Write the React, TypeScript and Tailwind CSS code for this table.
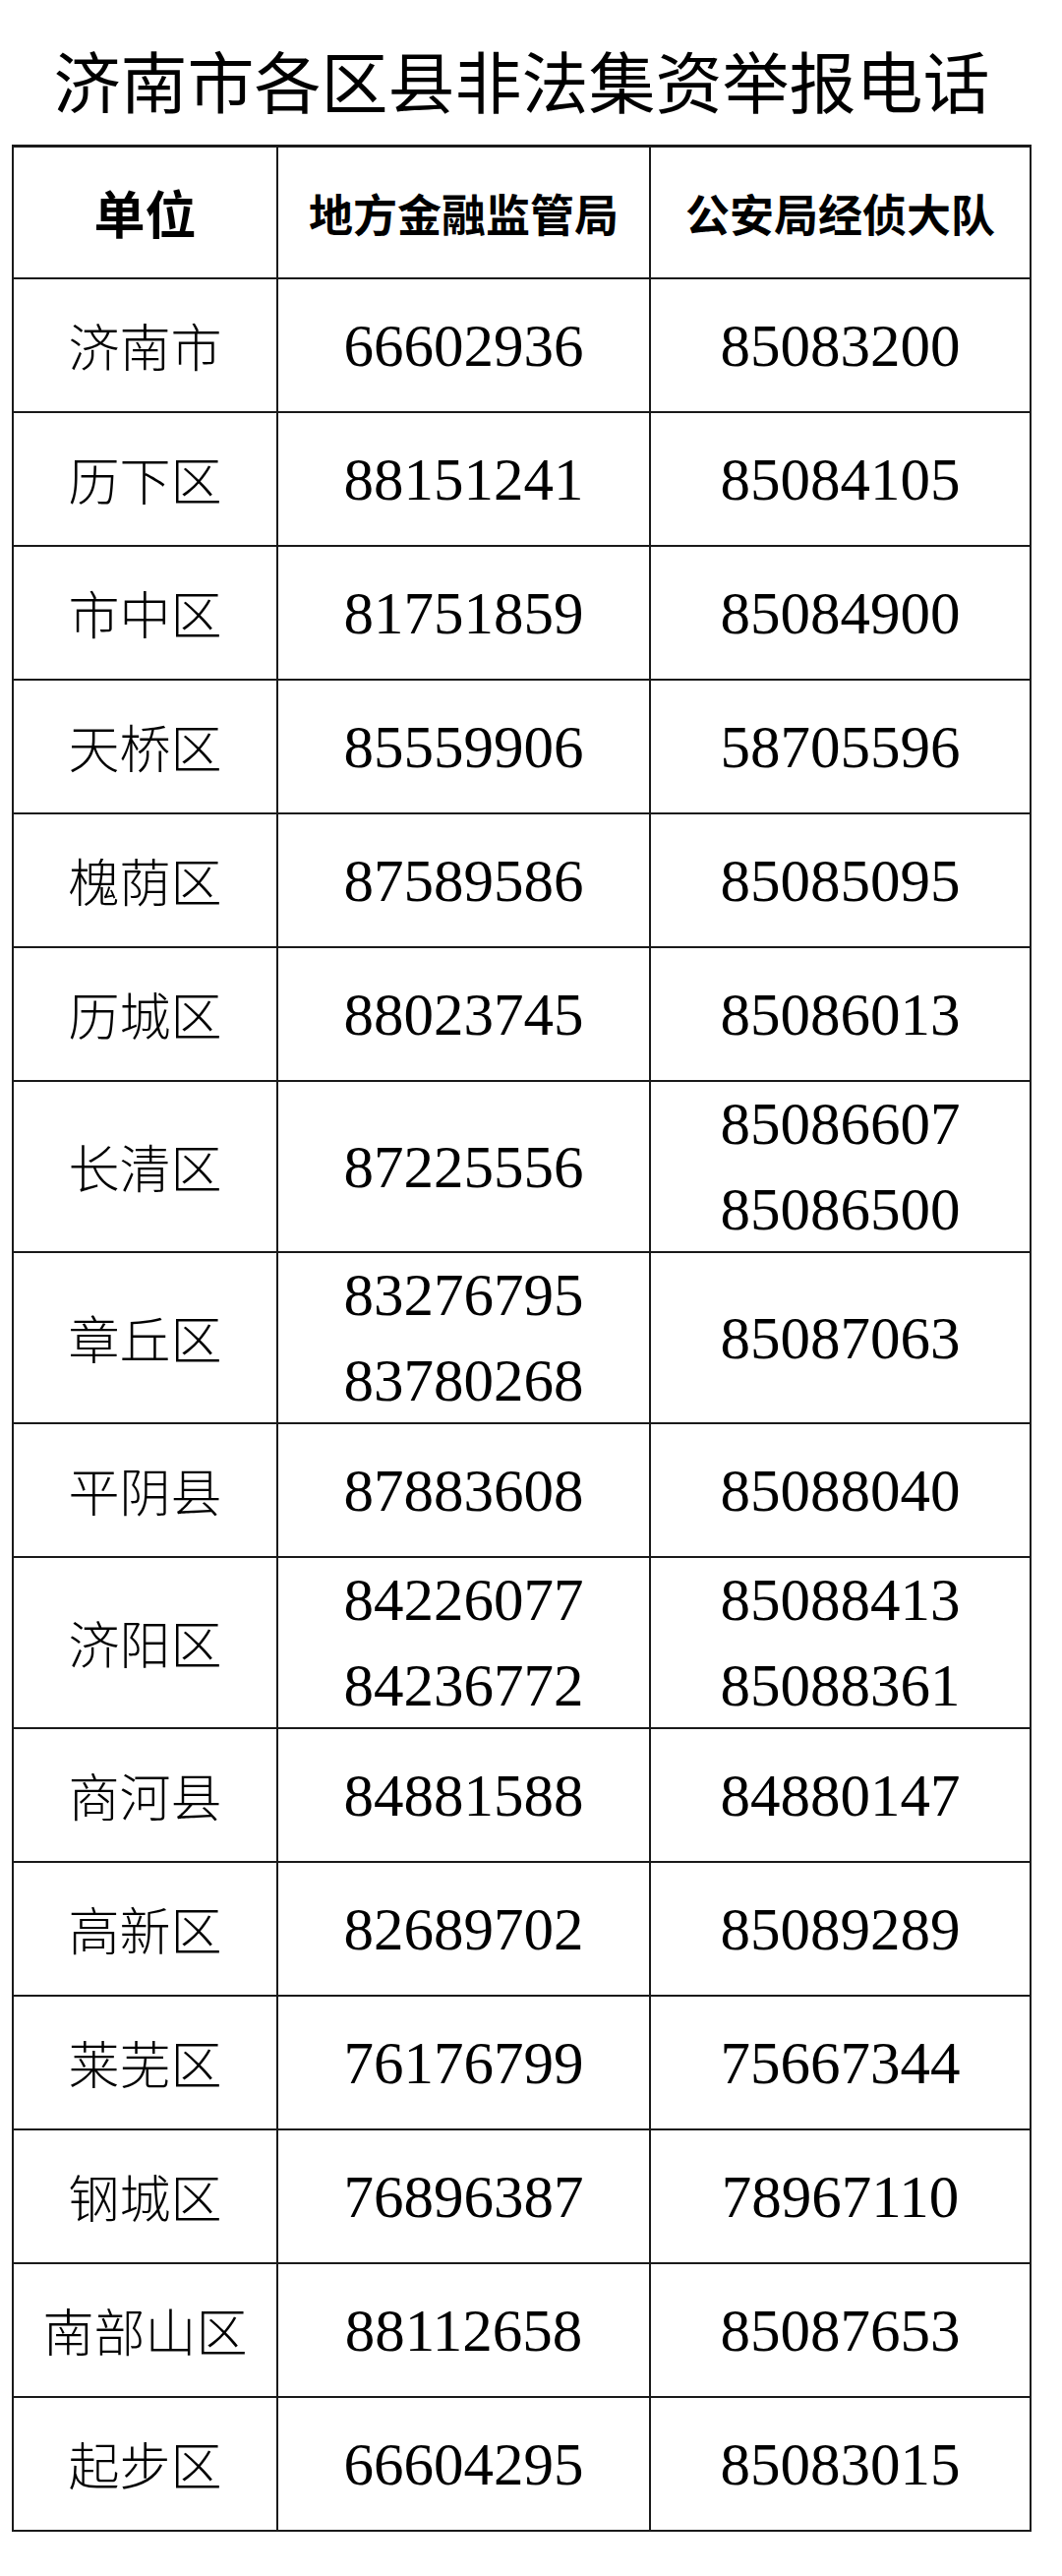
import React from "react";

type Row = { name: string; a: string[]; b: string[] };

const rows: Row[] = [
  { name: "济南市", a: ["66602936"], b: ["85083200"] },
  { name: "历下区", a: ["88151241"], b: ["85084105"] },
  { name: "市中区", a: ["81751859"], b: ["85084900"] },
  { name: "天桥区", a: ["85559906"], b: ["58705596"] },
  { name: "槐荫区", a: ["87589586"], b: ["85085095"] },
  { name: "历城区", a: ["88023745"], b: ["85086013"] },
  { name: "长清区", a: ["87225556"], b: ["85086607", "85086500"] },
  { name: "章丘区", a: ["83276795", "83780268"], b: ["85087063"] },
  { name: "平阴县", a: ["87883608"], b: ["85088040"] },
  { name: "济阳区", a: ["84226077", "84236772"], b: ["85088413", "85088361"] },
  { name: "商河县", a: ["84881588"], b: ["84880147"] },
  { name: "高新区", a: ["82689702"], b: ["85089289"] },
  { name: "莱芜区", a: ["76176799"], b: ["75667344"] },
  { name: "钢城区", a: ["76896387"], b: ["78967110"] },
  { name: "南部山区", a: ["88112658"], b: ["85087653"] },
  { name: "起步区", a: ["66604295"], b: ["85083015"] },
];

function Nums({ list, tall }: { list: string[]; tall: boolean }) {
  return (
    <div
      className={
        (tall ? "h-[174px] " : "h-[136px] ") +
        "flex flex-col items-center justify-center border-r-2 border-b-2 border-[#1a1a1a]"
      }
    >
      {list.map((n) => (
        <div
          key={n}
          className="font-['Liberation_Serif','DejaVu_Serif',serif] text-[61px] leading-[87px] text-black"
        >
          {n}
        </div>
      ))}
    </div>
  );
}

function Head({ text, big }: { text: string; big?: boolean }) {
  return (
    <div
      className={
        (big ? "text-[52px] " : "text-[45px] ") +
        "h-[134px] flex items-center justify-center border-r-2 border-b-2 border-[#1a1a1a] font-['Noto_Sans_CJK_SC','Noto_Sans',sans-serif] leading-none font-bold text-black"
      }
    >
      {text}
    </div>
  );
}

export default function App() {
  return (
    <div className="w-[1080px] h-[2619px] bg-white">
      <div className="ml-[12px] w-[1037px]">
        <div className="h-[147px] pt-[47px] text-center font-['Noto_Sans_CJK_SC','Noto_Sans',sans-serif] text-[68px] leading-[68px] font-normal text-black">
          济南市各区县非法集资举报电话
        </div>
        <div className="grid grid-cols-[269px_379px_387px] border-t-[3px] border-l-2 border-[#1a1a1a]">
          <Head text="单位" big />
          <Head text="地方金融监管局" />
          <Head text="公安局经侦大队" />
          {rows.map((r) => {
            const tall = r.a.length > 1 || r.b.length > 1;
            return (
              <React.Fragment key={r.name}>
                <div
                  className={
                    (tall ? "h-[174px] " : "h-[136px] ") +
                    "flex items-center justify-center border-r-2 border-b-2 border-[#1a1a1a] font-['Noto_Sans_CJK_SC','Noto_Sans',sans-serif] text-[52px] leading-none font-light text-black"
                  }
                >
                  {r.name}
                </div>
                <Nums list={r.a} tall={tall} />
                <Nums list={r.b} tall={tall} />
              </React.Fragment>
            );
          })}
        </div>
      </div>
    </div>
  );
}
